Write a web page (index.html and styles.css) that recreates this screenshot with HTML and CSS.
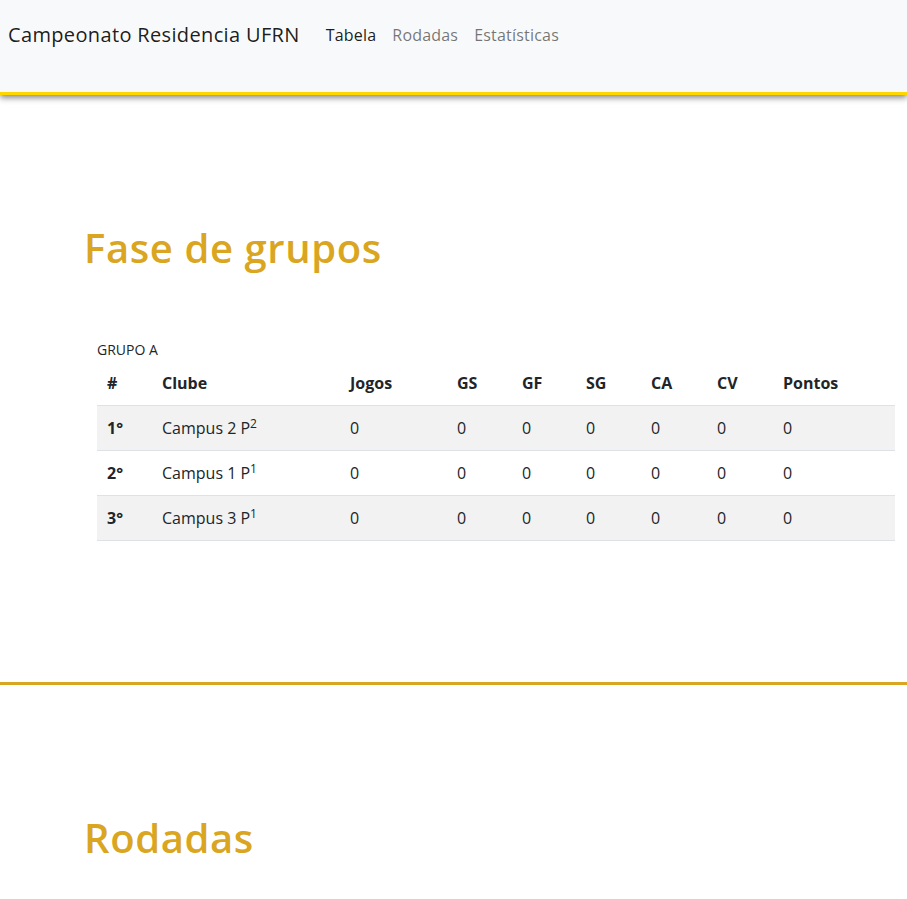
FILE: index.html
```html
<!DOCTYPE html>
<html lang="pt-BR">
<head>
<meta charset="utf-8">
<title>Campeonato Residencia UFRN</title>
<link rel="stylesheet" href="styles.css">
</head>
<body>
<nav class="navbar">
  <div class="navbar-row">
    <a class="brand" href="#">Campeonato Residencia UFRN</a>
    <ul class="nav-links">
      <li><a class="nav-link active" href="#tabela">Tabela</a></li>
      <li><a class="nav-link" href="#rodadas">Rodadas</a></li>
      <li><a class="nav-link" href="#estatisticas">Estatísticas</a></li>
    </ul>
  </div>
</nav>

<section class="section" id="tabela">
  <h2 class="section-title">Fase de grupos</h2>
  <div class="group">
    <table class="standings">
      <caption class="group-name">GRUPO A</caption>
      <colgroup>
        <col class="c-pos"><col class="c-club"><col class="c-jogos"><col class="c-gs"><col class="c-gf"><col class="c-sg"><col class="c-ca"><col class="c-cv"><col class="c-pts">
      </colgroup>
      <thead>
        <tr><th>#</th><th>Clube</th><th>Jogos</th><th>GS</th><th>GF</th><th>SG</th><th>CA</th><th>CV</th><th>Pontos</th></tr>
      </thead>
      <tbody>
        <tr class="striped"><th>1°</th><td>Campus 2 P<sup>2</sup></td><td>0</td><td>0</td><td>0</td><td>0</td><td>0</td><td>0</td><td>0</td></tr>
        <tr><th>2°</th><td>Campus 1 P<sup>1</sup></td><td>0</td><td>0</td><td>0</td><td>0</td><td>0</td><td>0</td><td>0</td></tr>
        <tr class="striped"><th>3°</th><td>Campus 3 P<sup>1</sup></td><td>0</td><td>0</td><td>0</td><td>0</td><td>0</td><td>0</td><td>0</td></tr>
      </tbody>
    </table>
  </div>
</section>

<hr class="divider">

<section class="section" id="rodadas">
  <h2 class="section-title">Rodadas</h2>
</section>
</body>
</html>
```

FILE: styles.css
```css
* { box-sizing: border-box; }
html, body { margin: 0; padding: 0; }
body {
  font-family: "Open Sans", "Noto Sans", sans-serif;
  font-size: 16px;
  line-height: 1.5;
  color: #212529;
  background: #fff;
}

.navbar {
  height: 95px;
  background: #f8f9fa;
  border-bottom: 3px solid #ffd700;
  box-shadow: 0 3px 6px rgba(0, 0, 0, 0.45);
  padding: 0 8px;
  position: relative;
  z-index: 1;
}
.navbar-row {
  height: 70px;
  display: flex;
  align-items: center;
}
.brand {
  font-size: 20px;
  letter-spacing: 0.35px;
  color: rgba(0, 0, 0, 0.9);
  text-decoration: none;
  margin-right: 18px;
}
.nav-links {
  list-style: none;
  margin: 0;
  padding: 0;
  display: flex;
}
.nav-link {
  display: block;
  padding: 0 8px;
  font-size: 16px;
  letter-spacing: 0.2px;
  color: rgba(0, 0, 0, 0.55);
  text-decoration: none;
}
.nav-link.active { color: rgba(0, 0, 0, 0.9); }

.section {
  padding: 129px 12px 0 84px;
}
.section-title {
  margin: 0;
  font-size: 40px;
  font-weight: 600;
  line-height: 1.2;
  letter-spacing: 0.6px;
  color: #daa520;
}

.group {
  margin: 67px 0 0 13px;
}
.standings {
  width: 798px;
  table-layout: fixed;
  border-collapse: collapse;
}
.group-name {
  caption-side: top;
  text-align: left;
  font-size: 14px;
  line-height: 21px;
  padding: 0 0 1px;
  color: #212529;
}
.c-pos { width: 55px; }
.c-club { width: 188px; }
.c-jogos { width: 107px; }
.c-gs { width: 65px; }
.c-gf { width: 64px; }
.c-sg { width: 65px; }
.c-ca { width: 66px; }
.c-cv { width: 66px; }
.c-pts { width: 122px; }

.standings th,
.standings td {
  padding: 10px;
  text-align: left;
  vertical-align: top;
  line-height: 24px;
}
.standings thead th {
  font-weight: 700;
  border-bottom: 1px solid #dee2e6;
}
.standings tbody th { font-weight: 700; }
.standings tbody td { font-weight: 400; }
.standings tbody tr { border-bottom: 1px solid #dee2e6; }
.standings tbody tr.striped { background: #f2f2f2; }
.standings sup {
  font-size: 0.75em;
  line-height: 0;
  vertical-align: 0.5em;
}

.divider {
  margin: 141px 0 0;
  border: 0;
  border-top: 3px solid #daa520;
  height: 0;
}
```
